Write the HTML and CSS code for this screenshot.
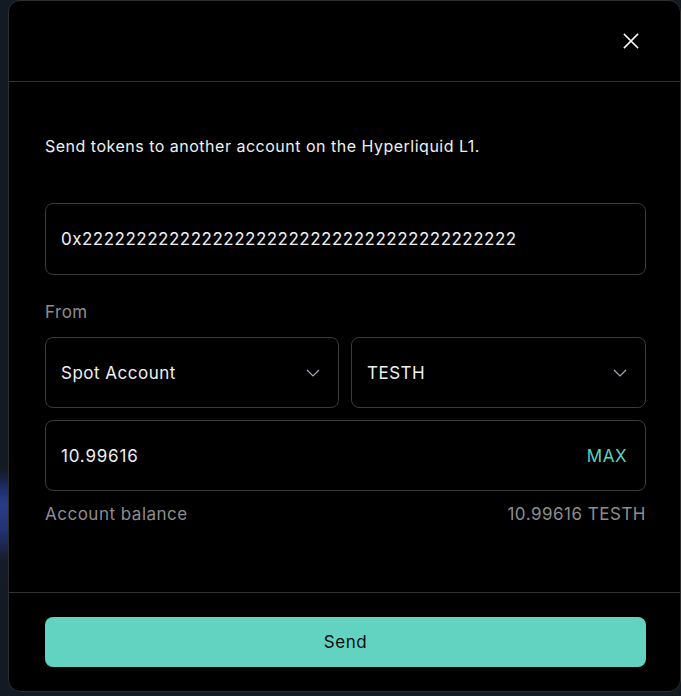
FILE: index.html
```html
<!DOCTYPE html>
<html lang="en">
<head>
<meta charset="utf-8">
<title>Send tokens</title>
<link rel="stylesheet" href="styles.css">
</head>
<body>
<div class="modal">
  <div class="modal-header">
    <button class="close" aria-label="Close">
      <svg width="16" height="16" viewBox="0 0 16 16" fill="none" stroke="#ffffff" stroke-width="1.6" stroke-linecap="square"><path d="M1.5 1.5 L14.5 14.5 M14.5 1.5 L1.5 14.5"/></svg>
    </button>
  </div>
  <div class="modal-body">
    <p class="intro">Send tokens to another account on the Hyperliquid L1.</p>
    <div class="field address">0x2222222222222222222222222222222222222222</div>
    <div class="label">From</div>
    <div class="selects">
      <div class="field select"><span>Spot Account</span>
        <svg width="14" height="8" viewBox="0 0 14 8" fill="none" stroke="#a3a7bb" stroke-width="1.2"><path d="M1 1 L7 7 L13 1"/></svg>
      </div>
      <div class="field select"><span>TESTH</span>
        <svg width="14" height="8" viewBox="0 0 14 8" fill="none" stroke="#a3a7bb" stroke-width="1.2"><path d="M1 1 L7 7 L13 1"/></svg>
      </div>
    </div>
    <div class="field amount"><span class="num">10.99616</span><span class="max">MAX</span></div>
    <div class="balance"><span>Account balance</span><span>10.99616 TESTH</span></div>
  </div>
  <div class="modal-footer">
    <button class="send">Send</button>
  </div>
</div>
</body>
</html>
```
FILE: styles.css
```css
* { box-sizing: border-box; }
html, body { margin: 0; padding: 0; }
body {
  width: 681px;
  height: 696px;
  overflow: hidden;
  font-family: Inter, "Noto Sans", sans-serif;
  background:
    linear-gradient(180deg, #121a24 0, #121a24 470px, #1f2f6e 490px, #2a3c88 505px, #233273 530px, #151d2b 560px, #121a24 600px, #121a24 100%);
}
.modal {
  margin-left: 8px;
  width: 673px;
  height: 692px;
  background: #000;
  border: 1px solid #2e2e2e;
  border-radius: 12px;
  display: flex;
  flex-direction: column;
  color: #ececec;
}
.modal-header {
  height: 81px;
  border-bottom: 1px solid #333333;
  display: flex;
  align-items: center;
  justify-content: flex-end;
  padding-right: 41px;
}
.close {
  background: none;
  border: 0;
  padding: 0;
  width: 16px;
  height: 16px;
  display: flex;
}
.modal-body {
  padding: 52px 34px 0 36px;
  height: 511px;
  border-bottom: 1px solid #333333;
  display: flex;
  flex-direction: column;
}
.intro {
  margin: 0;
  font-size: 16px;
  line-height: 24px;
  letter-spacing: 0.5px;
  color: #f0f0f0;
}
.field {
  border: 1px solid #3b3b3b;
  border-radius: 8px;
  height: 71px;
  padding: 0 16px 0 15px;
  display: flex;
  align-items: center;
  font-size: 17px;
  letter-spacing: 0.5px;
  color: #f0f0f0;
}
.address {
  margin-top: 45px;
  height: 72px;
}
.label {
  margin-top: 25px;
  font-size: 17px;
  letter-spacing: 0.5px;
  line-height: 24px;
  color: #8e8e8e;
}
.selects {
  margin-top: 13px;
  display: grid;
  grid-template-columns: 294px 295px;
  gap: 12px;
}
.select {
  justify-content: space-between;
  padding-right: 18px;
}
.amount {
  margin-top: 12px;
  justify-content: space-between;
  padding-right: 18px;
}
.num {
  letter-spacing: 0.8px;
}
.max {
  color: #5fd1bf;
}
.balance {
  margin-top: 11px;
  display: flex;
  justify-content: space-between;
  font-size: 17px;
  letter-spacing: 0.5px;
  line-height: 24px;
  color: #8e8e8e;
}
.modal-footer {
  padding: 24px 34px 0 36px;
}
.send {
  width: 100%;
  height: 50px;
  border: 0;
  border-radius: 8px;
  background: #62d3c1;
  color: #0b0b0b;
  font-family: Inter, "Noto Sans", sans-serif;
  font-size: 17px;
  letter-spacing: 0.5px;
}
```
